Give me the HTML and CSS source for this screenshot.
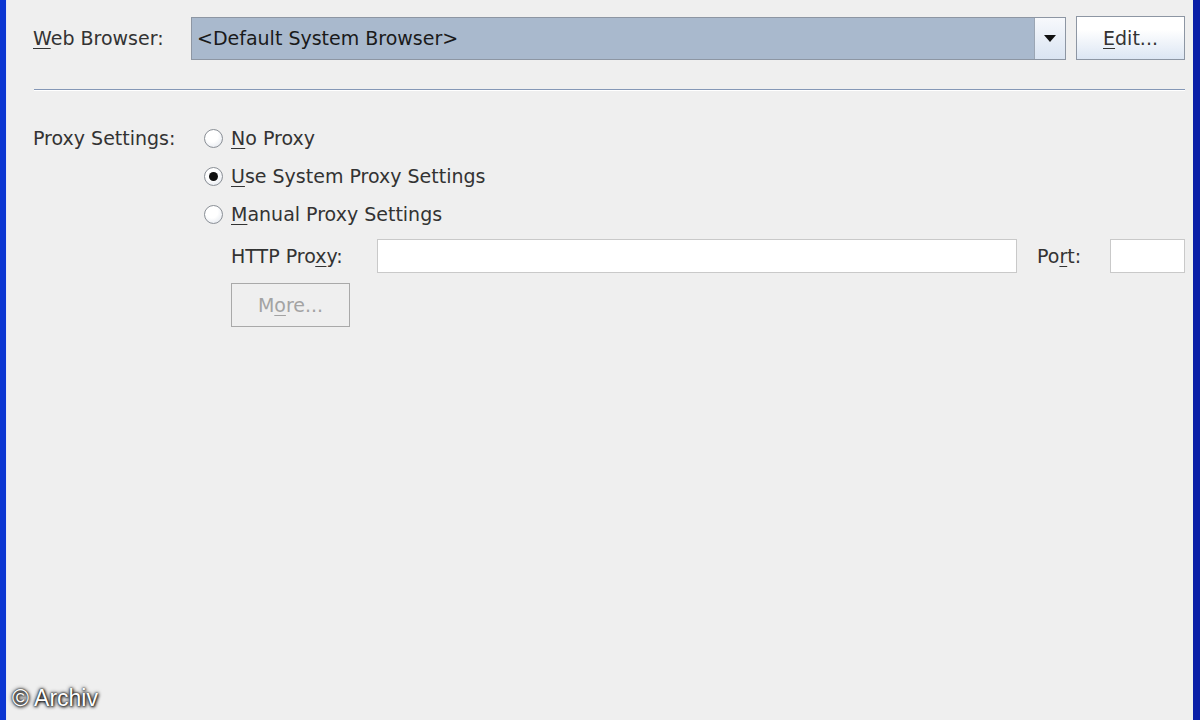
FILE: index.html
```html
<!DOCTYPE html>
<html lang="en">

<head>
    <meta charset="UTF-8">
    <title>Browser Settings</title>
    <link rel="stylesheet" href="styles.css">
</head>

<body>
    <div class="window">
        <div class="panel">
            <div class="row browser-row">
                <label class="label"><u>W</u>eb Browser:</label>
                <div class="combo">
                    <span class="combo-value">&lt;Default System Browser&gt;</span>
                    <span class="combo-arrow"><span class="triangle"></span></span>
                </div>
                <button class="btn"><u>E</u>dit...</button>
            </div>

            <div class="separator"></div>

            <div class="proxy">
                <div class="label proxy-label">Proxy Settings:</div>
                <div class="options">
                    <div class="radio-row">
                        <span class="radio"></span>
                        <span><u>N</u>o Proxy</span>
                    </div>
                    <div class="radio-row">
                        <span class="radio checked"></span>
                        <span><u>U</u>se System Proxy Settings</span>
                    </div>
                    <div class="radio-row">
                        <span class="radio"></span>
                        <span><u>M</u>anual Proxy Settings</span>
                    </div>

                    <div class="manual">
                        <div class="http-row">
                            <span class="http-label">HTTP Pro<u>x</u>y:</span>
                            <input type="text" class="field host">
                            <span class="port-label">Po<u>r</u>t:</span>
                            <input type="text" class="field port">
                        </div>
                        <button class="btn more" disabled>M<u>o</u>re...</button>
                    </div>
                </div>
            </div>
        </div>
    </div>

    <div class="watermark">© Archiv</div>
</body>

</html>
```

FILE: styles.css
```css
:root {
    --panel-bg: #efefef;
    --text-color: #333;
    --frame-blue: #0b36d2;
    --frame-dark: #0a1fa8;
    --border-gray: #8d96a3;
    --field-border: #c9c9c9;
    --font-family: 'DejaVu Sans', sans-serif;
}

html,
body {
    margin: 0;
    padding: 0;
    height: 100%;
}

body {
    font-family: var(--font-family);
    font-size: 19px;
    color: var(--text-color);
    background-color: var(--panel-bg);
    position: relative;
    overflow: hidden;
}

u {
    text-underline-offset: 3px;
    text-decoration-thickness: 1px;
}

.window {
    height: 100%;
    border-left: 6px solid var(--frame-blue);
    border-right: 7px solid var(--frame-dark);
    box-sizing: border-box;
}

.panel {
    height: 100%;
    padding: 16px 8px 0 27px;
    box-sizing: border-box;
    border-left: 1px solid #e4eaf6;
}

.row {
    display: flex;
    align-items: center;
}

.label {
    width: 158px;
    flex-shrink: 0;
    margin-left: -1px;
}

.combo {
    flex: 1;
    display: flex;
    height: 43px;
    box-sizing: border-box;
    border: 1px solid var(--border-gray);
    background-color: #a9b9cd;
}

.combo-value {
    flex: 1;
    display: flex;
    align-items: center;
    padding-left: 5px;
    color: #1a1a1a;
}

.combo-arrow {
    width: 30px;
    display: flex;
    align-items: center;
    justify-content: center;
    border-left: 1px solid #9ba6b4;
    background: linear-gradient(to bottom, #f7f9fc, #dae4f2);
}

.triangle {
    width: 0;
    height: 0;
    border-left: 6px solid transparent;
    border-right: 6px solid transparent;
    border-top: 7px solid #111;
}

.btn {
    font-family: var(--font-family);
    font-size: 19px;
    color: var(--text-color);
    height: 44px;
    padding: 0;
    border: 1px solid var(--border-gray);
    background: linear-gradient(to bottom, #ffffff 30%, #dce6f3);
}

.browser-row .btn {
    width: 109px;
    margin-left: 10px;
}

.separator {
    margin-top: 29px;
    height: 1px;
    background-color: #8497b6;
    border-bottom: 1px solid #ffffff;
}

.proxy {
    display: flex;
    margin-top: 28px;
}

.proxy-label {
    height: 38px;
    line-height: 38px;
}

.options {
    flex: 1;
}

.radio-row {
    display: flex;
    align-items: center;
    height: 38px;
    gap: 8px;
    padding-left: 13px;
}

.radio {
    width: 19px;
    height: 19px;
    box-sizing: border-box;
    border-radius: 50%;
    border: 1px solid #8a8f96;
    background: radial-gradient(circle at 40% 35%, #ffffff 40%, #dde2ea);
    display: flex;
    align-items: center;
    justify-content: center;
}

.radio.checked::after {
    content: "";
    width: 9px;
    height: 9px;
    border-radius: 50%;
    background-color: #111;
}

.manual {
    padding-left: 40px;
    padding-top: 6px;
}

.http-row {
    display: flex;
    align-items: center;
}

.http-label {
    width: 146px;
}

.field {
    height: 34px;
    box-sizing: border-box;
    border: 1px solid var(--field-border);
    background-color: #ffffff;
    margin: 0;
}

.host {
    flex: 1;
}

.port-label {
    width: 73px;
    padding-left: 20px;
    box-sizing: content-box;
}

.port {
    width: 75px;
}

.btn.more {
    margin-top: 10px;
    width: 119px;
    height: 44px;
    color: #a3a3a3;
    border-color: #a9a9a9;
    background: var(--panel-bg);
}

.watermark {
    position: absolute;
    left: 12px;
    bottom: 8px;
    font-family: 'Liberation Sans', Arial, sans-serif;
    font-size: 23px;
    color: #ffffff;
    text-shadow: 0 0 4px #000, 0 0 2px #000, 1px 1px 3px #333;
}
```
